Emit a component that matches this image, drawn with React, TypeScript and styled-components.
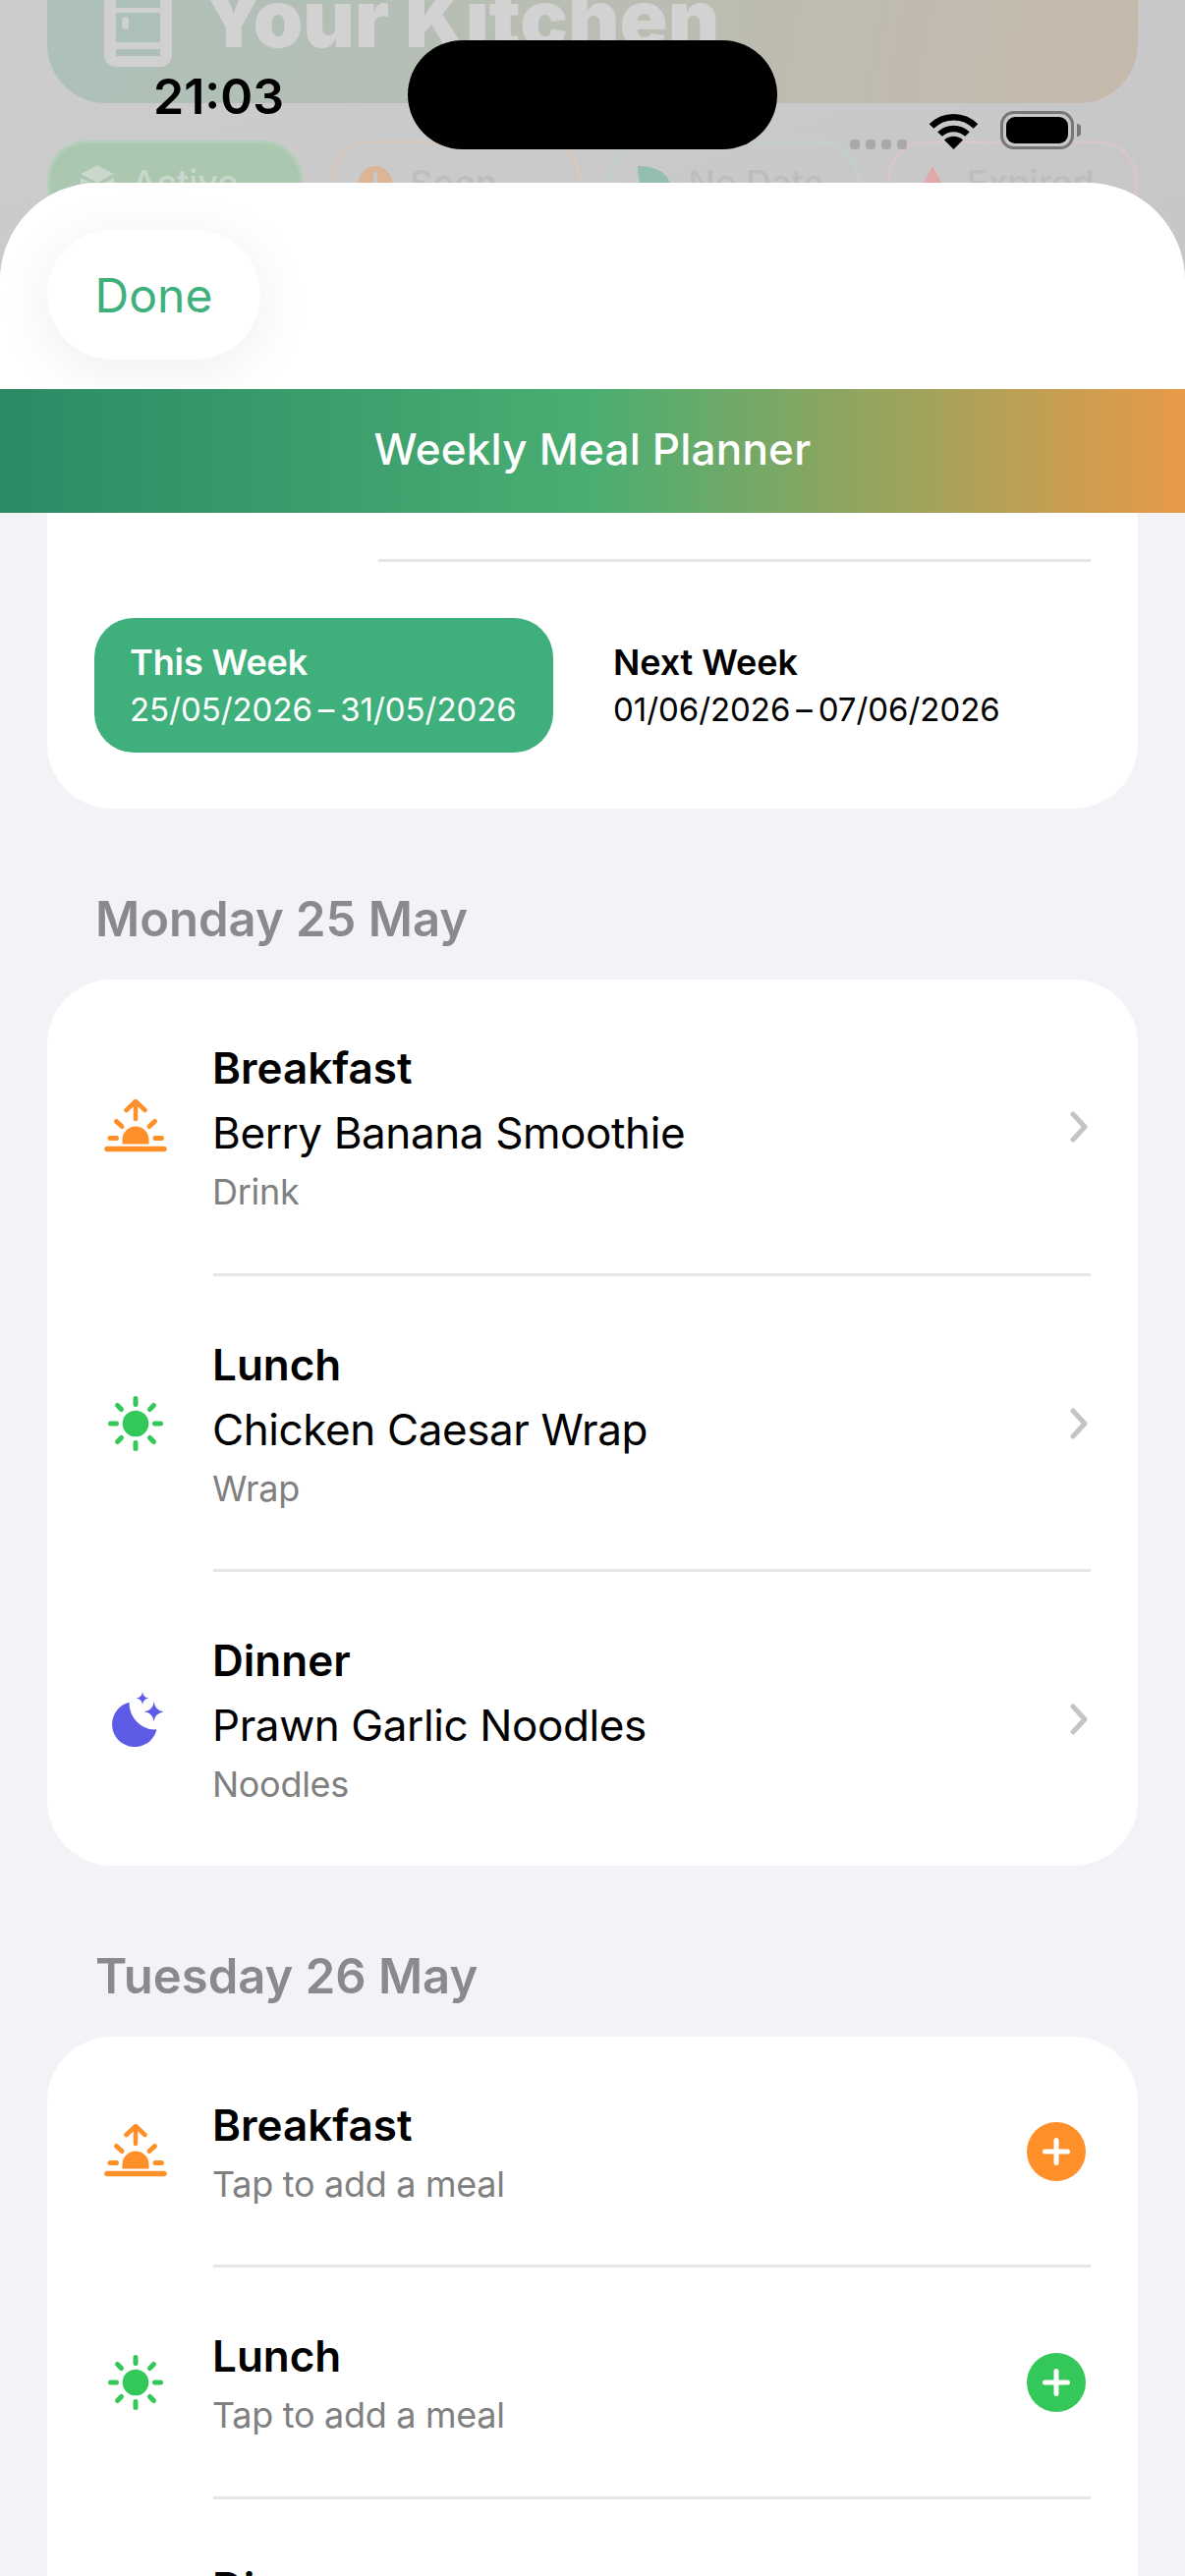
import styled, { createGlobalStyle } from "styled-components";

const GlobalStyle = createGlobalStyle`
  html, body {
    margin: 0;
    padding: 0;
    background: #f2f2f7;
    font-family: "Inter", "Liberation Sans", sans-serif;
  }
`;

const ORANGE = "#ff9029";
const GREEN = "#34c759";
const INDIGO = "#5e5ce6";

type MealKind = "breakfast" | "lunch" | "dinner";

type Meal = {
  kind: MealKind;
  label: string;
  name?: string;
  category?: string;
};

const kindColor: Record<MealKind, string> = {
  breakfast: ORANGE,
  lunch: GREEN,
  dinner: INDIGO,
};

const monday: Meal[] = [
  { kind: "breakfast", label: "Breakfast", name: "Berry Banana Smoothie", category: "Drink" },
  { kind: "lunch", label: "Lunch", name: "Chicken Caesar Wrap", category: "Wrap" },
  { kind: "dinner", label: "Dinner", name: "Prawn Garlic Noodles", category: "Noodles" },
];

const tuesday: Meal[] = [
  { kind: "breakfast", label: "Breakfast" },
  { kind: "lunch", label: "Lunch" },
  { kind: "dinner", label: "Dinner" },
];

const SunriseIcon = () => (
  <svg width="64" height="56" viewBox="0 0 64 56" fill="none" stroke={ORANGE} strokeLinecap="round" strokeLinejoin="round">
    <path d="M32 3V20M22.5 11L32 2L41.5 11" strokeWidth="4.5" />
    <path d="M12.5 22.5L18 27.5M51.5 22.5L46 27.5M6 39.5H12.5M52 39.5H58.5" strokeWidth="5" />
    <path d="M18.5 45.5V41A13.5 13.5 0 0 1 45.5 41V45.5Z" fill={ORANGE} stroke="none" />
    <path d="M3 50.5H61" strokeWidth="5.5" />
  </svg>
);

const SunIcon = () => (
  <svg width="64" height="64" viewBox="0 0 64 64" fill="none" stroke={GREEN} strokeWidth="5" strokeLinecap="round">
    <circle cx="32" cy="32" r="13.3" fill={GREEN} stroke="none" />
    <path d="M32 6.5V12.5M32 51.5V57.5M6.5 32H12.5M51.5 32H57.5M13.5 13.5L17.5 17.5M50.5 13.5L46.5 17.5M13.5 50.5L17.5 46.5M50.5 50.5L46.5 46.5" />
  </svg>
);

const MoonIcon = () => (
  <svg width="56" height="56" viewBox="-3 0 56 56" fill={INDIGO}>
    <path d="M17.7 11A23 23 0 1 0 46 40C47 38.5 45.5 38 44 38.5A27 27 0 0 1 18.5 12.5C19 11 18.7 10.5 17.7 11Z" />
    <path d="M32 0Q32.7 5.9 38.5 6.6Q32.7 7.3 32 13.1Q31.3 7.3 25.5 6.6Q31.3 5.9 32 0Z" />
    <path d="M43.7 10.3Q44.8 19.2 53.7 20.3Q44.8 21.4 43.7 30.3Q42.6 21.4 33.7 20.3Q42.6 19.2 43.7 10.3Z" />
  </svg>
);

const FridgeIcon = () => (
  <svg width="69" height="68" viewBox="0 0 69 68">
    <path d="M0 0H69V56A12 12 0 0 1 57 68H12A12 12 0 0 1 0 56Z" fill="#d0d0d0" />
    <path d="M12 0H57V8H12ZM12 13H57V43H12ZM12 50H57V57H12Z" fill="#adc0b8" />
    <rect x="18" y="17" width="7" height="13" rx="3.5" fill="#d0d0d0" />
  </svg>
);

const MealIcon = ({ kind }: { kind: MealKind }) => {
  if (kind === "breakfast") return <SunriseIcon />;
  if (kind === "lunch") return <SunIcon />;
  return <MoonIcon />;
};

const MealList = ({ meals }: { meals: Meal[] }) => (
  <Card>
    {meals.map((meal) => (
      <MealRow key={meal.label}>
        <IconCell>
          <MealIcon kind={meal.kind} />
        </IconCell>
        <TextCol>
          <MealLabel>{meal.label}</MealLabel>
          {meal.name && <MealName>{meal.name}</MealName>}
          <MealHint>{meal.category ?? "Tap to add a meal"}</MealHint>
        </TextCol>
        {meal.name ? (
          <Chevron width="18" height="32" viewBox="0 0 18 32" fill="none" stroke="#c4c4c6" strokeWidth="5" strokeLinecap="round" strokeLinejoin="round">
            <path d="M3 3L15 16L3 29" />
          </Chevron>
        ) : (
          <AddButton $color={kindColor[meal.kind]}>
            <svg width="28" height="28" viewBox="0 0 28 28" stroke="#fff" strokeWidth="5" strokeLinecap="round">
              <path d="M14 2.5V25.5M2.5 14H25.5" />
            </svg>
          </AddButton>
        )}
      </MealRow>
    ))}
  </Card>
);

export default function App() {
  return (
    <>
      <GlobalStyle />
      <Page>
        <Backdrop>
          <KitchenCard>
            <FridgeIcon />
            <KitchenTitle>Your Kitchen</KitchenTitle>
          </KitchenCard>
          <Chips>
            <Chip $bg="#abc7b0" $border="#b5ceba" $text="#c9d7cc" $inset={31}>
              <svg width="34" height="36" viewBox="0 0 34 36" fill="#c9d7cc">
                <path d="M17 0L34 9L17 18L0 9ZM0 13L15 21V36L0 28ZM34 13L19 21V36L34 28Z" />
              </svg>
              Active
            </Chip>
            <Chip $border="#d6c9bf" $text="#bdbdbd">
              <svg width="34" height="34" viewBox="0 0 34 34">
                <circle cx="17" cy="17" r="17" fill="#dcb597" />
                <path d="M17 8V19" stroke="#c8c8c8" strokeWidth="4" strokeLinecap="round" />
              </svg>
              Soon
            </Chip>
            <Chip $border="#c3cfcb" $text="#bdbdbd">
              <svg width="34" height="34" viewBox="0 0 34 34" fill="#93bdb0">
                <path d="M0 0C20 0 34 8 34 26C34 30 30 34 24 34C10 34 0 24 0 0Z" />
              </svg>
              No Date
            </Chip>
            <Chip $border="#d8c7ca" $text="#bdbdbd">
              <svg width="34" height="34" viewBox="0 0 34 34" fill="#e0a8a8">
                <path d="M17 0L34 32H0Z" />
              </svg>
              Expired
            </Chip>
          </Chips>
        </Backdrop>

        <StatusBar>
          <Clock>21:03</Clock>
          <Island />
          <StatusIcons>
            <SignalDots>
              <i />
              <i />
              <i />
              <i />
            </SignalDots>
            <svg width="51" height="37" viewBox="0 0 51 37" fill="none" stroke="#000" strokeWidth="6.5">
              <path d="M3 13.5C15.5 1 35.5 1 48 13.5" />
              <path d="M11.5 21.5C19 14 32 14 39.5 21.5" />
              <path d="M25.5 37L16 27.5C21 22.5 30 22.5 35 27.5Z" fill="#000" stroke="none" />
            </svg>
            <Battery>
              <BatteryFill />
            </Battery>
          </StatusIcons>
        </StatusBar>

        <Sheet>
          <SheetTop>
            <DoneButton>Done</DoneButton>
          </SheetTop>
          <Banner>Weekly Meal Planner</Banner>
          <Content>
            <WeekCard>
              <WeekDivider />
              <WeekPicker>
                <WeekOption $active>
                  <WeekTitle>This Week</WeekTitle>
                  <WeekDates>25/05/2026{"\u2009–\u2009"}31/05/2026</WeekDates>
                </WeekOption>
                <WeekOption>
                  <WeekTitle>Next Week</WeekTitle>
                  <WeekDates>01/06/2026{"\u2009–\u2009"}07/06/2026</WeekDates>
                </WeekOption>
              </WeekPicker>
            </WeekCard>
            <DayHeading>Monday 25 May</DayHeading>
            <MealList meals={monday} />
            <DayHeading>Tuesday 26 May</DayHeading>
            <MealList meals={tuesday} />
          </Content>
        </Sheet>
      </Page>
    </>
  );
}

const Page = styled.div`
  position: relative;
  width: 1206px;
  height: 2622px;
  overflow: hidden;
  background: #f2f2f7;
`;

const Backdrop = styled.div`
  position: absolute;
  top: 0;
  left: 0;
  width: 100%;
  height: 300px;
  background: linear-gradient(160deg, #cdcdcd, #c6c6c8);
`;

const KitchenCard = styled.div`
  box-sizing: border-box;
  margin: 0 48px;
  height: 105px;
  padding-left: 58px;
  display: flex;
  gap: 31px;
  align-items: flex-start;
  overflow: hidden;
  border-radius: 0 0 60px 60px;
  background: linear-gradient(100deg, #adc1b9, #c6b9ac);

  svg {
    flex: none;
  }
`;

const KitchenTitle = styled.div`
  margin-top: -31px;
  font-size: 81px;
  line-height: 100px;
  font-weight: 900;
  color: #d2d2d2;
  white-space: nowrap;
`;

const Chips = styled.div`
  display: flex;
  gap: 28px;
  margin: 38px 48px 0;
`;

const Chip = styled.div<{ $bg?: string; $border: string; $text: string; $inset?: number }>`
  box-sizing: border-box;
  flex: 1;
  height: 86px;
  display: flex;
  align-items: center;
  gap: 18px;
  padding-left: ${(props) => props.$inset ?? 26}px;
  border-radius: 40px;
  border: 3px solid ${(props) => props.$border};
  background: ${(props) => props.$bg ?? "transparent"};
  color: ${(props) => props.$text};
  font-size: 36px;
  font-weight: 500;
  white-space: nowrap;

  svg {
    flex: none;
  }
`;

const StatusBar = styled.div`
  position: absolute;
  top: 0;
  left: 0;
  z-index: 2;
  width: 100%;
  display: grid;
  grid-template-columns: 415px 376px 1fr;
`;

const Clock = styled.div`
  padding: 68px 0 0 156px;
  font-size: 50px;
  line-height: 60px;
  font-weight: 600;
  color: #000;
`;

const Island = styled.div`
  margin-top: 41px;
  height: 111px;
  border-radius: 56px;
  background: #000;
`;

const StatusIcons = styled.div`
  margin-top: 79px;
  padding-left: 74px;
  display: flex;
  align-items: flex-end;
  gap: 22px;
`;

const SignalDots = styled.div`
  display: flex;
  gap: 6px;

  i {
    width: 10px;
    height: 10px;
    border-radius: 3px;
    background: #a9a9a9;
  }
`;

const Battery = styled.div`
  position: relative;
  box-sizing: border-box;
  width: 75px;
  height: 39px;
  padding: 3px;
  border: 3px solid #777;
  border-radius: 14px;

  &::after {
    content: "";
    position: absolute;
    top: 10px;
    right: -10px;
    width: 4px;
    height: 13px;
    border-radius: 0 6px 6px 0;
    background: #777;
  }
`;

const BatteryFill = styled.div`
  height: 100%;
  border-radius: 9px;
  background: #000;
`;

const Sheet = styled.div`
  position: relative;
  z-index: 1;
  margin-top: 186px;
  border-radius: 100px 100px 0 0;
  overflow: hidden;
  background: #f2f2f7;
`;

const SheetTop = styled.div`
  box-sizing: border-box;
  height: 210px;
  padding: 48px 48px 0;
  background: #fff;
`;

const DoneButton = styled.div`
  box-sizing: border-box;
  width: 217px;
  height: 132px;
  display: flex;
  align-items: center;
  justify-content: center;
  border-radius: 66px;
  background: #fff;
  box-shadow: 0 10px 60px rgba(0, 0, 0, 0.07);
  color: #3eb07c;
  font-size: 48px;
`;

const Banner = styled.div`
  box-sizing: border-box;
  height: 126px;
  padding-bottom: 5px;
  display: flex;
  align-items: center;
  justify-content: center;
  background: linear-gradient(90deg, #2b8a65 0%, #4aae72 50%, #e89a48 100%);
  color: #fff;
  font-size: 44px;
  font-weight: 500;
  letter-spacing: 0.2px;
`;

const Content = styled.div`
  padding: 0 48px;
`;

const WeekCard = styled.div`
  height: 301px;
  box-sizing: border-box;
  padding: 47px 48px 0;
  border-radius: 0 0 66px 66px;
  background: #fff;
`;

const WeekDivider = styled.div`
  height: 3px;
  margin-left: 289px;
  background: #e6e6e8;
`;

const WeekPicker = styled.div`
  display: grid;
  grid-template-columns: 467px 1fr;
  gap: 25px;
  margin-top: 57px;
`;

const WeekOption = styled.div<{ $active?: boolean }>`
  box-sizing: border-box;
  height: 137px;
  display: flex;
  flex-direction: column;
  justify-content: center;
  gap: 4px;
  padding-left: 36px;
  border-radius: 40px;
  background: ${(props) => (props.$active ? "#3fb07c" : "transparent")};
  color: ${(props) => (props.$active ? "#fff" : "#000")};
`;

const WeekTitle = styled.div`
  font-size: 36px;
  line-height: 44px;
  font-weight: 600;
  letter-spacing: -0.1px;
`;

const WeekDates = styled.div`
  font-size: 33px;
  line-height: 44px;
  letter-spacing: -0.05px;
  white-space: nowrap;
`;

const DayHeading = styled.div`
  margin: 88px 0 36px 49px;
  font-size: 49px;
  line-height: 50px;
  font-weight: 600;
  color: #8a8a8e;
`;

const Card = styled.div`
  padding: 0 48px 0 0;
  border-radius: 66px;
  background: #fff;
`;

const MealRow = styled.div`
  display: flex;
  align-items: center;
  padding: 60px 0 58.5px 58px;

  & + & {
    position: relative;
    margin-top: 3px;

    &::before {
      content: "";
      position: absolute;
      top: -3px;
      left: 169px;
      right: 0;
      height: 3px;
      background: #e6e6e8;
    }
  }
`;

const IconCell = styled.div`
  width: 64px;
  flex: none;
  display: flex;
  justify-content: center;
`;

const TextCol = styled.div`
  flex: 1;
  margin-left: 46px;
  display: flex;
  flex-direction: column;
  gap: 6px;
`;

const MealLabel = styled.div`
  font-size: 44px;
  line-height: 60px;
  font-weight: 600;
  color: #000;
`;

const MealName = styled.div`
  font-size: 44px;
  line-height: 60px;
  letter-spacing: -0.4px;
  color: #000;
`;

const MealHint = styled.div`
  font-size: 36px;
  line-height: 48px;
  letter-spacing: -0.3px;
  color: #808080;
`;

const Chevron = styled.svg`
  flex: none;
  margin-right: 3px;
`;

const AddButton = styled.div<{ $color: string }>`
  width: 60px;
  height: 60px;
  flex: none;
  margin-right: 5px;
  display: flex;
  align-items: center;
  justify-content: center;
  border-radius: 50%;
  background: ${(props) => props.$color};
`;
